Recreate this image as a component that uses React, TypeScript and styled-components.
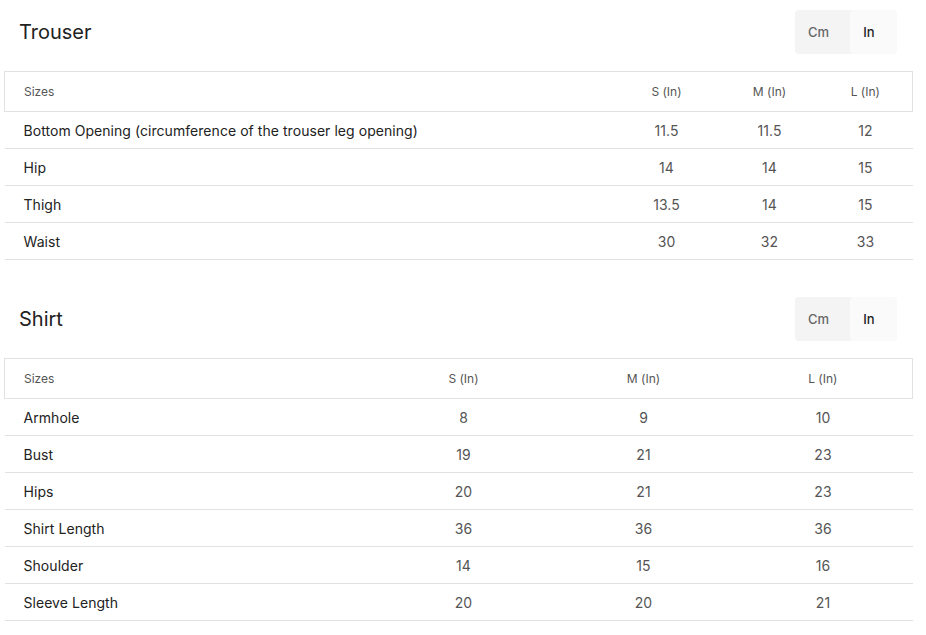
import React from 'react'
import styled, { createGlobalStyle } from 'styled-components'

const GlobalStyle = createGlobalStyle`
  body {
    margin: 0;
    background: #fff;
    font-family: Inter, "Noto Sans", sans-serif;
    color: #222;
  }
`

const Page = styled.div`
  padding: 10px 14px 0 4px;
  display: flex;
  flex-direction: column;
  gap: 37px;
`

const Section = styled.section`
  display: flex;
  flex-direction: column;
  gap: 17px;
`

const Head = styled.div`
  display: flex;
  align-items: center;
  justify-content: space-between;
  padding: 0 15px 0 15px;
  height: 44px;
`

const Title = styled.h2`
  margin: 0;
  font-size: 20px;
  font-weight: 400;
  color: #222;
`

const Toggle = styled.div`
  display: flex;
  height: 44px;
  border-radius: 4px;
  overflow: hidden;
  background: #f4f4f4;
`

const ToggleBtn = styled.button<{ $active?: boolean }>`
  border: 0;
  margin: 0;
  padding: 0 ${(p) => (p.$active ? '9px' : '8px')} 0 0;
  width: ${(p) => (p.$active ? '47px' : '55px')};
  background: ${(p) => (p.$active ? '#fafafa' : 'transparent')};
  color: ${(p) => (p.$active ? '#222' : '#666')};
  font-family: Inter, sans-serif;
  font-size: 13px;
  font-weight: 500;
  cursor: pointer;
  border-radius: ${(p) => (p.$active ? '4px' : '0')};
`

const Table = styled.table`
  width: 908px;
  border-collapse: collapse;
  table-layout: fixed;
`

const HeadCell = styled.th<{ $first?: boolean }>`
  height: 39px;
  padding: 0 0 0 ${(p) => (p.$first ? '19px' : '0')};
  text-align: ${(p) => (p.$first ? 'left' : 'center')};
  font-size: 12px;
  font-weight: 400;
  color: #555;
  border-top: 1px solid #e2e2e2;
  border-bottom: 1px solid #e2e2e2;
  &:first-child {
    border-left: 1px solid #e2e2e2;
  }
  &:last-child {
    border-right: 1px solid #e2e2e2;
  }
`

const Cell = styled.td<{ $first?: boolean }>`
  height: 36px;
  padding: 0 0 0 ${(p) => (p.$first ? '19px' : '0')};
  text-align: ${(p) => (p.$first ? 'left' : 'center')};
  font-size: 14px;
  letter-spacing: 0.05px;
  color: ${(p) => (p.$first ? '#222' : '#555')};
  border-bottom: 1px solid #e2e2e2;
`

type Row = { label: string; values: string[] }

type ChartProps = {
  title: string
  widths: number[]
  rows: Row[]
}

function SizeChart({ title, widths, rows }: ChartProps) {
  return (
    <Section>
      <Head>
        <Title>{title}</Title>
        <Toggle>
          <ToggleBtn>Cm</ToggleBtn>
          <ToggleBtn $active>In</ToggleBtn>
        </Toggle>
      </Head>
      <Table>
        <colgroup>
          {widths.map((w, i) => (
            <col key={i} style={{ width: w }} />
          ))}
        </colgroup>
        <thead>
          <tr>
            <HeadCell $first>Sizes</HeadCell>
            <HeadCell>S (In)</HeadCell>
            <HeadCell>M (In)</HeadCell>
            <HeadCell>L (In)</HeadCell>
          </tr>
        </thead>
        <tbody>
          {rows.map((r) => (
            <tr key={r.label}>
              <Cell $first>{r.label}</Cell>
              {r.values.map((v, i) => (
                <Cell key={i}>{v}</Cell>
              ))}
            </tr>
          ))}
        </tbody>
      </Table>
    </Section>
  )
}

const trouser: Row[] = [
  { label: 'Bottom Opening (circumference of the trouser leg opening)', values: ['11.5', '11.5', '12'] },
  { label: 'Hip', values: ['14', '14', '15'] },
  { label: 'Thigh', values: ['13.5', '14', '15'] },
  { label: 'Waist', values: ['30', '32', '33'] },
]

const shirt: Row[] = [
  { label: 'Armhole', values: ['8', '9', '10'] },
  { label: 'Bust', values: ['19', '21', '23'] },
  { label: 'Hips', values: ['20', '21', '23'] },
  { label: 'Shirt Length', values: ['36', '36', '36'] },
  { label: 'Shoulder', values: ['14', '15', '16'] },
  { label: 'Sleeve Length', values: ['20', '20', '21'] },
]

export default function App() {
  return (
    <>
      <GlobalStyle />
      <Page>
        <SizeChart title="Trouser" widths={[608, 108, 98, 94]} rows={trouser} />
        <SizeChart title="Shirt" widths={[369, 180, 180, 179]} rows={shirt} />
      </Page>
    </>
  )
}
